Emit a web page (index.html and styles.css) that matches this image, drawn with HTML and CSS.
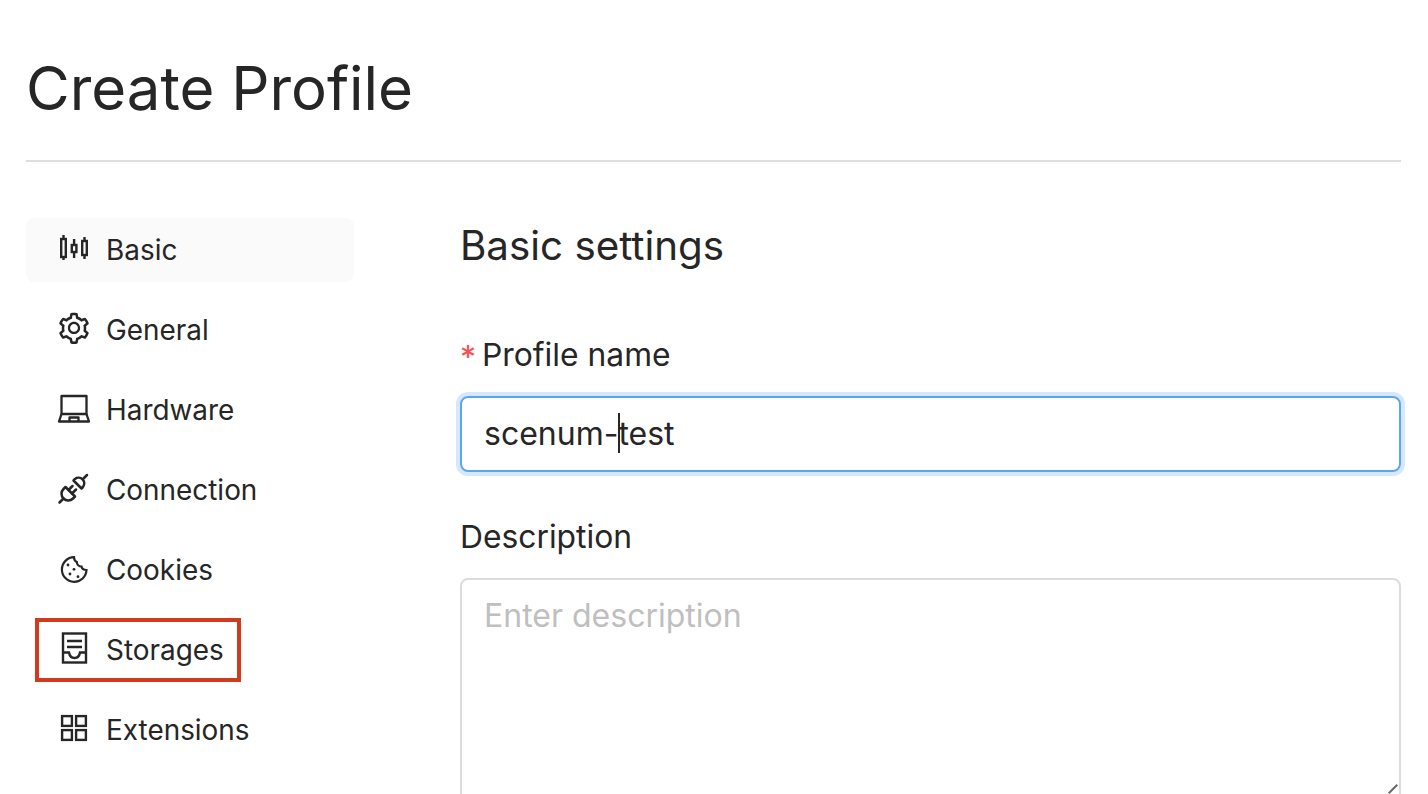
FILE: index.html
```html
<!DOCTYPE html>
<html lang="en">
<head>
<meta charset="utf-8">
<title>Create Profile</title>
<link rel="stylesheet" href="styles.css">
</head>
<body>
<div class="page">
  <h1 class="title">Create Profile</h1>
  <div class="columns">
    <nav class="nav">
      <a class="nav-item active">
        <svg class="icon" viewBox="0 0 32 32" fill="none" stroke="currentColor" stroke-width="2.4"><rect x="3.2" y="5" width="4.6" height="18"/><path d="M5.500 1v4M5.500 23v3"/><rect x="13.800" y="11" width="4.600" height="7"/><path d="M16.100 5v6M16.100 18v6"/><rect x="24.200" y="7" width="4.600" height="14"/><path d="M26.500 3v4M26.500 21v4"/></svg>
        <span>Basic</span>
      </a>
      <a class="nav-item">
        <svg class="icon" viewBox="0 0 1024 1024" fill="currentColor"><g transform="translate(-58 -112) scale(1.1133)"><path d="M924.8 625.7l-65.5-56c3.1-19 4.7-38.4 4.7-57.8s-1.6-38.8-4.7-57.8l65.5-56a32.03 32.03 0 0 0 9.3-35.2l-.9-2.6a443.74 443.74 0 0 0-79.7-137.9l-1.8-2.1a32.12 32.12 0 0 0-35.1-9.5l-81.3 28.9c-30-24.6-63.5-44-99.7-57.6l-15.7-85a32.05 32.05 0 0 0-25.8-25.7l-2.7-.5c-52.1-9.4-106.9-9.4-159 0l-2.7.5a32.05 32.05 0 0 0-25.8 25.7l-15.8 85.4a351.86 351.86 0 0 0-99 57.4l-81.9-29.1a32 32 0 0 0-35.1 9.5l-1.8 2.1a446.02 446.02 0 0 0-79.7 137.9l-.9 2.6c-4.5 12.5-.8 26.5 9.3 35.2l66.3 56.6c-3.1 18.8-4.6 38-4.6 57.1 0 19.2 1.5 38.4 4.6 57.1L99 625.5a32.03 32.03 0 0 0-9.3 35.2l.9 2.6c18.1 50.4 44.9 96.9 79.7 137.9l1.8 2.1a32.12 32.12 0 0 0 35.1 9.5l81.9-29.1c29.8 24.5 63.1 43.9 99 57.4l15.8 85.4a32.05 32.05 0 0 0 25.8 25.7l2.7.5a449.4 449.4 0 0 0 159 0l2.7-.5a32.05 32.05 0 0 0 25.8-25.7l15.7-85a350 350 0 0 0 99.7-57.6l81.3 28.9a32 32 0 0 0 35.1-9.5l1.8-2.1c34.8-41.1 61.6-87.5 79.7-137.9l.9-2.6c4.5-12.3.8-26.3-9.3-35zM788.3 465.9c2.5 15.1 3.8 30.6 3.8 46.1s-1.3 31-3.8 46.1l-6.6 40.1 74.7 63.9a370.03 370.03 0 0 1-42.6 73.6L721 702.8l-31.4 25.8c-23.9 19.6-50.5 35-79.3 45.8l-38.1 14.3-17.9 97a377.5 377.5 0 0 1-85 0l-17.9-97.2-37.8-14.5c-28.5-10.8-55-26.2-78.7-45.7l-31.4-25.9-93.4 33.2c-17-22.9-31.2-47.6-42.6-73.6l75.5-64.5-6.5-40c-2.4-14.9-3.7-30.3-3.7-45.5 0-15.3 1.2-30.6 3.7-45.5l6.5-40-75.5-64.5c11.3-26.1 25.6-50.7 42.6-73.6l93.4 33.2 31.4-25.9c23.7-19.5 50.2-34.9 78.7-45.7l37.9-14.3 17.9-97.2c28.1-3.2 56.8-3.2 85 0l17.9 97 38.1 14.3c28.7 10.8 55.4 26.2 79.3 45.8l31.4 25.8 92.8-32.9c17 22.9 31.2 47.6 42.6 73.6L781.8 426l6.5 39.9zM512 326c-97.2 0-176 78.8-176 176s78.8 176 176 176 176-78.8 176-176-78.8-176-176-176zm79.2 255.2A111.6 111.6 0 0 1 512 614c-29.9 0-58-11.7-79.2-32.8A111.6 111.6 0 0 1 400 502c0-29.9 11.7-58 32.8-79.2C454 401.6 482.1 390 512 390c29.9 0 58 11.6 79.2 32.8A111.6 111.6 0 0 1 624 502c0 29.9-11.7 58-32.8 79.2z"/></g></svg>
        <span>General</span>
      </a>
      <a class="nav-item">
        <svg class="icon" viewBox="0 0 32 32" fill="none" stroke="currentColor" stroke-width="2.3" stroke-linejoin="round"><rect x="3.500" y="2" width="25" height="18"/><path d="M3.500 20L1 27.500H31L28.500 20"/><path d="M11.500 27.500V23.500H20.500V27.500"/></svg>
        <span>Hardware</span>
      </a>
      <a class="nav-item">
        <svg class="icon" viewBox="0 0 32 32" fill="none" stroke="currentColor" stroke-width="2.5" stroke-linecap="round" stroke-linejoin="round"><path d="M15.500 6.500L23.500 14.500L25 13A5.700 5.700 0 0 0 17 5Z"/><path d="M25.500 4.500L29 1"/><path d="M7.500 13L17 22.500L15 24.500A6.700 6.700 0 0 1 5.500 15Z"/><path d="M10.500 16L14.500 12M14 19.500L18 15.500"/><path d="M5.500 24.500L1.500 28.500"/></svg>
        <span>Connection</span>
      </a>
      <a class="nav-item">
        <svg class="icon" viewBox="0 0 32 32" fill="none" stroke="currentColor" stroke-width="2.2" stroke-linecap="round"><path d="M16 3.200A12.300 12.300 0 1 0 28.500 16C25.800 16 24 14.800 23.500 12.500C21 12.500 18.800 10.500 18.800 8C17 7 16 5.200 16 3.200Z"/><circle cx="10" cy="11" r="1.400" fill="currentColor" stroke="none"/><circle cx="16" cy="15.300" r="1.400" fill="currentColor" stroke="none"/><circle cx="12" cy="20" r="1.400" fill="currentColor" stroke="none"/><circle cx="20" cy="22.700" r="1.400" fill="currentColor" stroke="none"/></svg>
        <span>Cookies</span>
      </a>
      <a class="nav-item">
        <svg class="icon" viewBox="0 3 32 32" fill="none" stroke="currentColor" stroke-width="2.4"><rect x="5" y="2.500" width="23" height="29"/><path d="M9 10H24M9 16H24"/><path d="M5 21.500H11C11.500 24.500 13.500 27 16.500 27S21.500 24.500 22 21.500H28"/></svg>
        <span>Storages</span>
      </a>
      <a class="nav-item">
        <svg class="icon" viewBox="0 0 32 32" fill="none" stroke="currentColor" stroke-width="2.4"><rect x="4.100" y="2.100" width="9.800" height="9.800"/><rect x="18.100" y="2.100" width="9.800" height="9.800"/><rect x="4.100" y="16.100" width="9.800" height="9.800"/><rect x="18.100" y="16.100" width="9.800" height="9.800"/></svg>
        <span>Extensions</span>
      </a>
      <div class="highlight"></div>
    </nav>
    <main class="form">
      <h2 class="section">Basic settings</h2>
      <label class="label label-name"><span class="req">*</span>Profile name</label>
      <div class="input"><span>scenum-</span><span class="caret"></span><span>test</span></div>
      <label class="label label-desc">Description</label>
      <div class="textarea">Enter description<span class="grip"></span></div>
    </main>
  </div>
</div>
</body>
</html>
```
FILE: styles.css
```css
* { box-sizing: border-box; }
html, body { margin: 0; height: 100%; overflow: hidden; background: #fff; }
body { font-family: "Inter", "Liberation Sans", sans-serif; color: #262626; }
.page { padding: 0 27px 0 26px; }
.title {
  margin: 0;
  height: 162px;
  padding-top: 50px;
  font-size: 59.9px;
  line-height: 76px;
  font-weight: 400;
  border-bottom: 2px solid #dedede;
}
.columns { display: flex; padding-top: 56px; }
.nav { position: relative; width: 328px; flex: none; margin-right: 106px; display: flex; flex-direction: column; gap: 16px; }
.nav-item {
  display: flex;
  align-items: center;
  height: 64px;
  padding-left: 32px;
  gap: 16px;
  font-size: 27.9px;
  border-radius: 8px;
}
.nav-item.active { background: #fafafa; }
.icon { width: 32px; height: 32px; flex: none; overflow: visible; }
.highlight {
  position: absolute;
  left: 9px;
  top: 400px;
  width: 206px;
  height: 64px;
  border: 4px solid #d03a1f;
}
.form { flex: 1; min-width: 0; }
.section { margin: 0; font-size: 40.3px; line-height: 56px; font-weight: 400; }
.label { display: block; font-size: 31.8px; line-height: 44px; }
.label-name { margin-top: 59px; }
.req { color: #ff4d4f; margin-right: 6px; font-size: 32px; line-height: 1; vertical-align: -3px; }
.input {
  display: flex;
  align-items: center;
  height: 76px;
  margin-top: 19px;
  padding: 0 22px 2px;
  font-size: 32px;
  border: 2px solid #5aa5f5;
  border-radius: 8px;
  box-shadow: 0 0 0 4px #d6e8fc;
}
.caret { width: 2px; height: 40px; background: #262626; margin-right: -2px; }
.label-desc { margin-top: 43px; }
.textarea {
  position: relative;
  height: 240px;
  margin-top: 19px;
  padding: 14px 22px;
  font-size: 32px;
  line-height: 44px;
  color: #bfbfbf;
  border: 2px solid #dcdcdc;
  border-radius: 8px;
}
.grip {
  position: absolute;
  right: 0;
  top: 208px;
  width: 12px;
  height: 2px;
  background: #666;
  transform: rotate(-45deg);
}
```
